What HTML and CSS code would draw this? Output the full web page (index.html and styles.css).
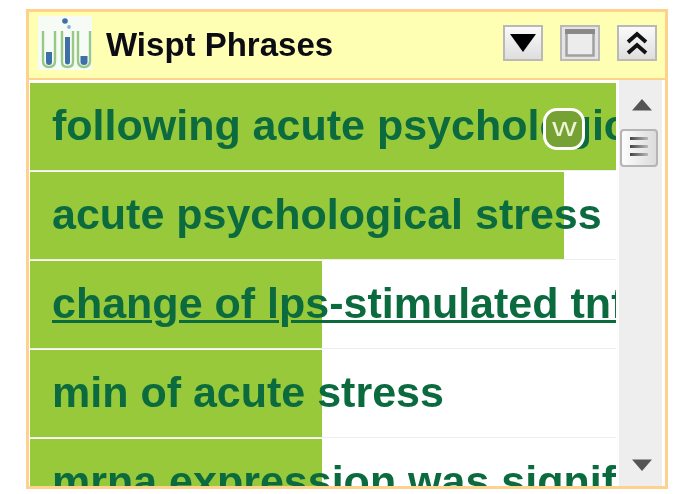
FILE: index.html
```html
<!DOCTYPE html>
<html lang="en">
<head>
<meta charset="utf-8">
<title>Wispt Phrases</title>
<link rel="stylesheet" href="styles.css">
</head>
<body>
<div class="panel">
  <header class="head">
    <svg class="logo" viewBox="0 0 54 54" aria-hidden="true">
      <rect width="54" height="54" fill="#f7fbf6"/>
      <g fill="none" stroke="#95c985" stroke-width="2.400">
        <path d="M5 15V45q0 6 6 6t6-6V15"/>
        <path d="M24 15V46q0 5 5.500 5t5.500-5V15"/>
        <path d="M40 15V45q0 6 6 6t6-6V15"/>
      </g>
      <g fill="#3f6fa8">
        <path d="M8 36h6v10q0 3-3 3t-3-3z"/>
        <path d="M27 21h5v25q0 2.500-2.500 2.500T27 46z"/>
        <path d="M42.500 40h7v6q0 3-3.500 3t-3.500-3z"/>
        <circle cx="27" cy="5" r="2.800"/>
        <circle cx="31" cy="11" r="1.900" fill="#8fb0d2"/>
      </g>
    </svg>
    <h1 class="title">Wispt Phrases</h1>
    <div class="tools">
      <button class="tool" aria-label="Menu"><svg viewBox="0 0 36 32"><path d="M5 7H31L18 25z" fill="#000"/></svg></button>
      <button class="tool tool-grey" aria-label="Maximize"><svg viewBox="0 0 36 32"><rect x="4.500" y="3.500" width="27" height="25" fill="#ececec" stroke="#a0a0a0" stroke-width="2.500"/><rect x="3" y="2" width="30" height="5" fill="#8a8a8a"/></svg></button>
      <button class="tool" aria-label="Collapse"><svg viewBox="0 0 36 32"><path d="M9 15L18 7L27 15M9 26L18 18L27 26" fill="none" stroke="#111" stroke-width="3.800"/></svg></button>
    </div>
  </header>
  <div class="body">
    <div class="list">
      <div class="row"><span class="bar" style="width:100%"></span><span class="phrase">following acute psychological stress</span></div>
      <div class="row"><span class="bar" style="width:91.200%"></span><span class="phrase">acute psychological stress</span></div>
      <div class="row"><span class="bar" style="width:49.800%"></span><span class="phrase link">change of lps-stimulated tnf production</span></div>
      <div class="row"><span class="bar" style="width:49.800%"></span><span class="phrase">min of acute stress</span></div>
      <div class="row"><span class="bar" style="width:49.800%"></span><span class="phrase">mrna expression was significantly</span></div>
      <span class="badge"><span class="badge-letter">w</span></span>
    </div>
    <div class="scroll">
      <svg class="arrow" viewBox="0 0 20 12"><path d="M0 11.500H20L10 0z" fill="#555"/></svg>
      <div class="thumb"><i></i><i></i><i></i></div>
      <svg class="arrow arrow-down" viewBox="0 0 20 12"><path d="M0 .5H20L10 12z" fill="#555"/></svg>
    </div>
  </div>
</div>
</body>
</html>
```

FILE: styles.css
```css
html, body { margin: 0; padding: 0; background: #fff; }
body { width: 695px; height: 494px; overflow: hidden; padding: 9px 0 0 26px; box-sizing: border-box; font-family: "Liberation Sans", Arial, sans-serif; }
.panel { width: 642px; height: 480px; box-sizing: border-box; border: 3px solid #fdd28c; background: #fff; display: flex; flex-direction: column; overflow: hidden; filter: blur(0.5px); }
.head { height: 68px; flex: none; box-sizing: border-box; background: #ffffb4; border-bottom: 2px solid #fdd28c; display: flex; align-items: center; padding: 0 8px 4px 9px; }
.logo { width: 54px; height: 54px; flex: none; }
.title { margin: 4px 0 0 14px; font-size: 33px; font-weight: bold; color: #0c0c14; flex: 1; white-space: nowrap; }
.tools { display: flex; gap: 17px; }
.tool { width: 40px; height: 36px; padding: 0; border: 2px solid #b9b9b9; background: linear-gradient(#fafafa, #dedede); display: block; box-sizing: border-box; }
.tool svg { display: block; width: 36px; height: 32px; }
.tool-grey { background: #e4e4e4; }
.body { flex: 1; min-height: 0; display: flex; padding: 0 3px 0 1px; background: #fff; }
.list { position: relative; width: 586px; margin: 3px 3px 0 0; flex: none; overflow: hidden; }
.row { position: relative; height: 87px; margin-bottom: 2px; box-sizing: border-box; overflow: hidden; background: #fff; box-shadow: 0 1px 0 #eeeeee; }
.bar { position: absolute; left: 0; top: 0; bottom: 0; background: #97c93a; }
.phrase { position: relative; display: block; padding-left: 22px; line-height: 85px; font-size: 43px; font-weight: bold; color: #0b6b3e; white-space: nowrap; }
.link { text-decoration: underline; text-decoration-thickness: 3px; }
.badge { position: absolute; left: 513px; top: 25px; width: 42px; height: 42px; box-sizing: border-box; border: 3px solid #fff; border-radius: 14px; background: #76a233; color: #eef4d8; font-size: 26px; line-height: 32px; text-align: center; }
.badge-letter { display: inline-block; transform: scaleX(1.3); }
.scroll { width: 43px; flex: none; background: #eeeeee; display: flex; flex-direction: column; align-items: flex-start; padding: 19px 0 15px 13px; box-sizing: border-box; }
.arrow { width: 20px; height: 12px; flex: none; }
.arrow-down { margin-top: auto; }
.thumb { width: 38px; height: 38px; margin: 18px 0 0 -12px; flex: none; box-sizing: border-box; border: 2px solid #b5b5b5; border-radius: 4px; background: linear-gradient(90deg, #fcfcfc, #dcdcdc); display: flex; flex-direction: column; gap: 5px; padding: 6px 8px; }
.thumb i { display: block; height: 3px; background: linear-gradient(90deg, #444, #bbb); }
```
